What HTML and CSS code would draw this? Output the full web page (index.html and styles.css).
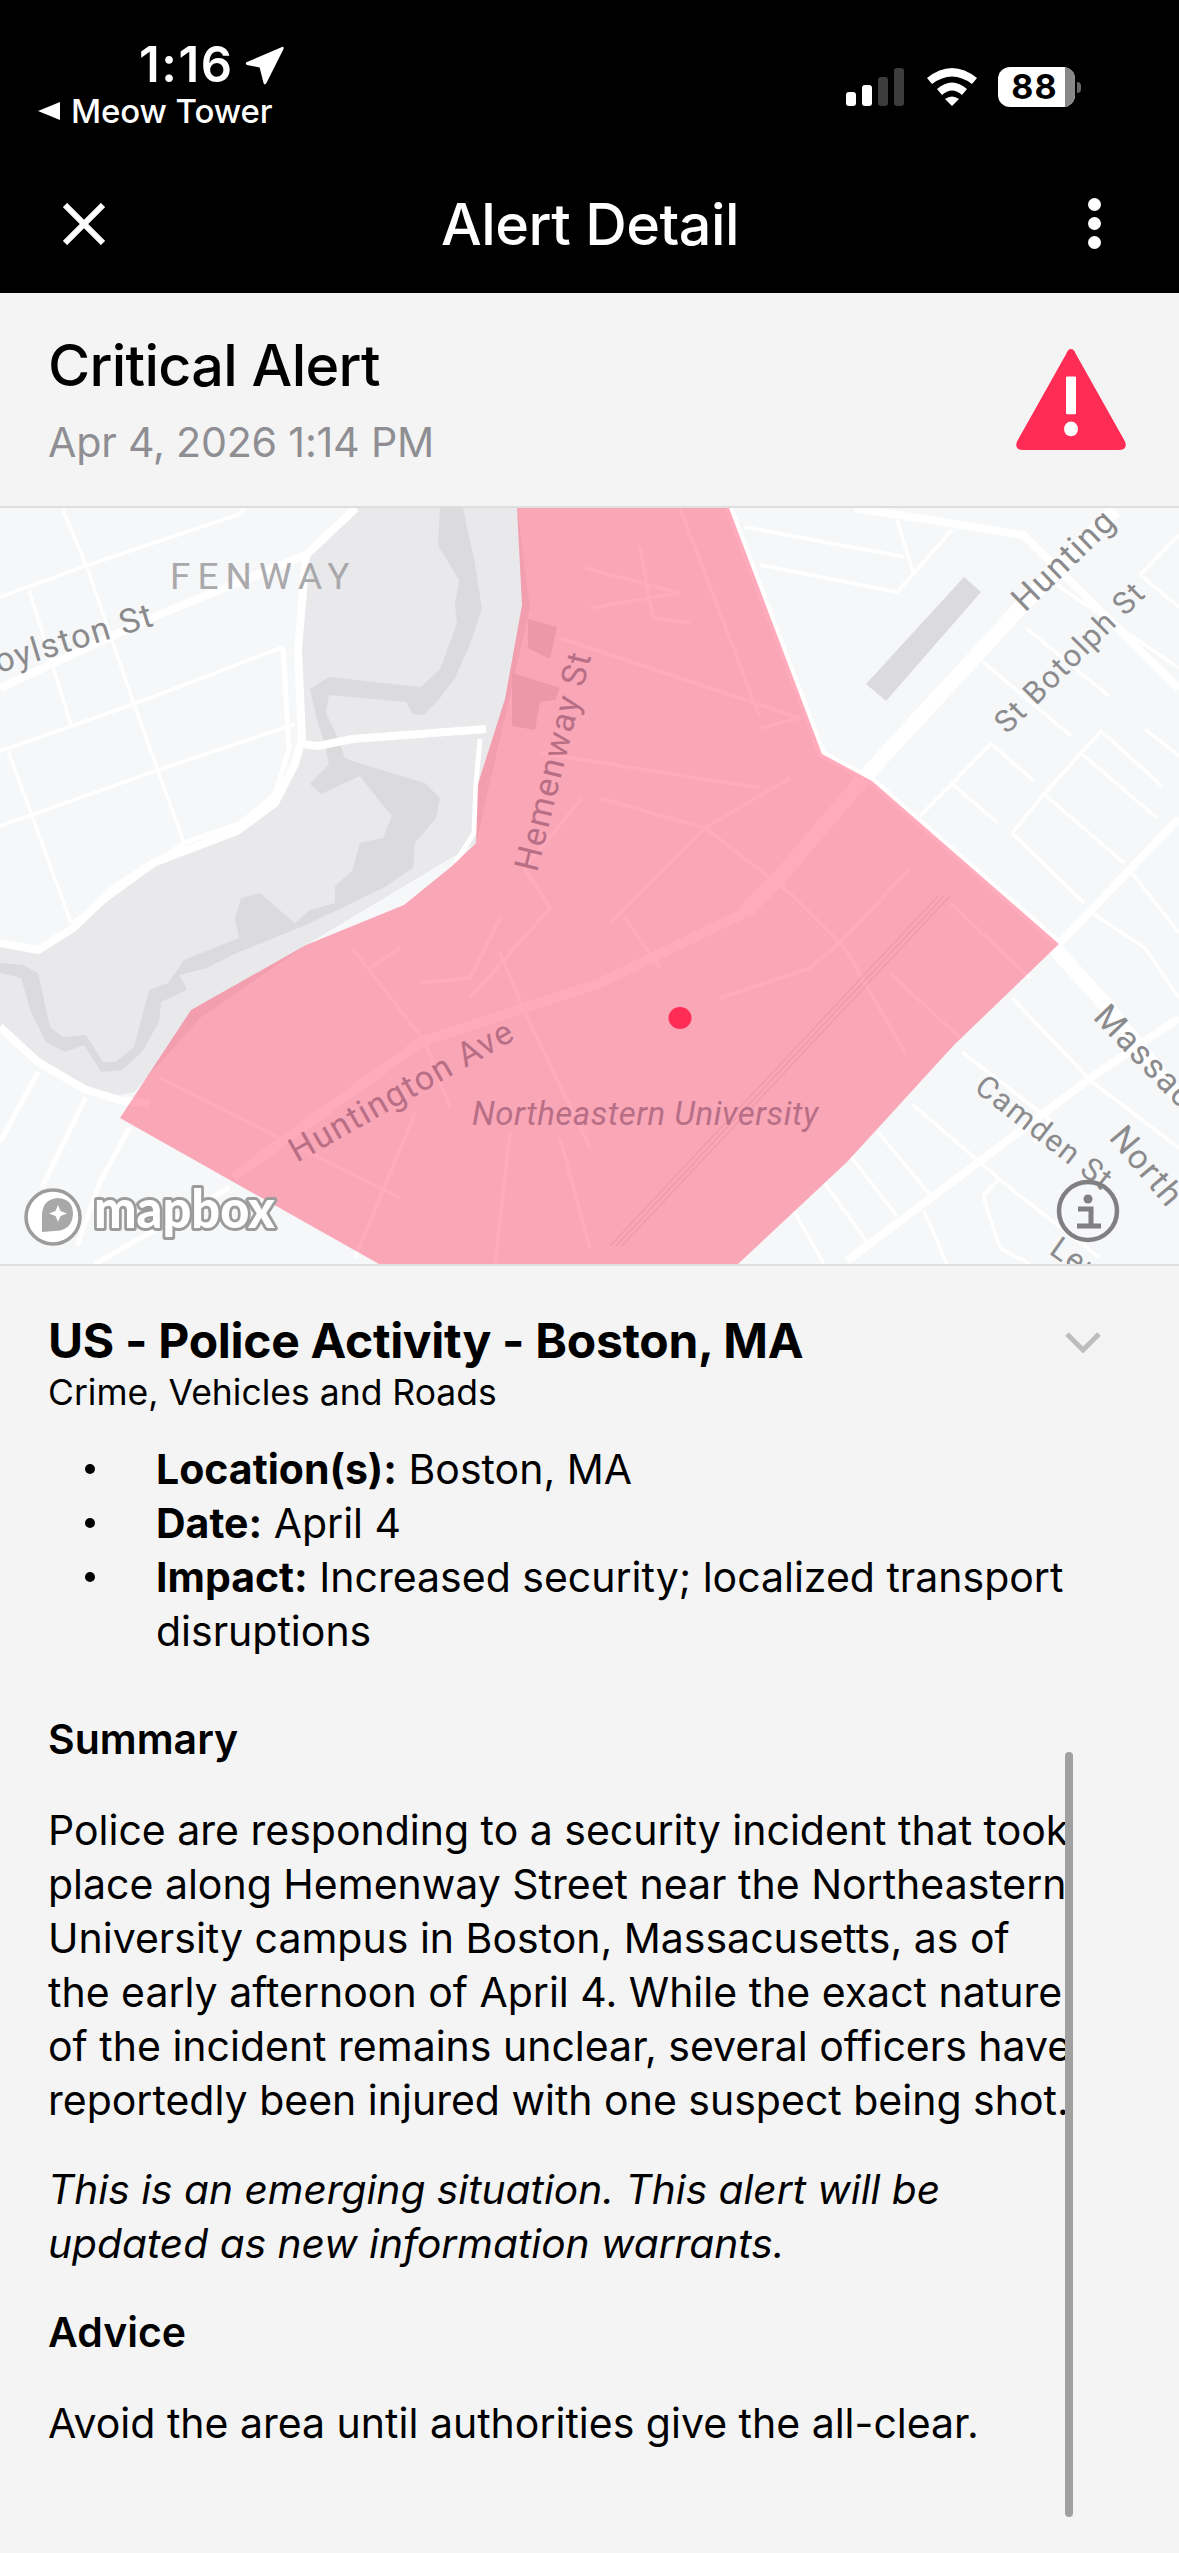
FILE: index.html
```html
<!DOCTYPE html>
<html lang="en">
<head>
<meta charset="utf-8">
<title>Alert Detail</title>
<link rel="stylesheet" href="styles.css">
</head>
<body>
<div class="phone">
  <header class="top">
    <div class="status">
      <div class="status-left">
        <div class="time-row">
          <span class="time">1:16</span>
          <svg class="loc" viewBox="0 0 40 40"><path d="M38 1 Q40 0 39.500 3 L22 38 Q20 41 19 38 L15 22 L2 19.500 Q-.5 18 2 16.500 Z"/></svg>
        </div>
        <div class="back-row">
          <svg class="back-tri" viewBox="0 0 22 18"><path d="M22 0 V18 L0 9 Z"/></svg>
          <span class="back-label">Meow Tower</span>
        </div>
      </div>
      <div class="status-right">
        <svg class="signal" viewBox="0 0 58 38">
          <rect class="on" x="0" y="24" width="10" height="14" rx="3"/>
          <rect class="on" x="16" y="17" width="10" height="21" rx="3"/>
          <rect class="off" x="32" y="9" width="10" height="29" rx="3"/>
          <rect class="off" x="48" y="0" width="10" height="38" rx="3"/>
        </svg>
        <svg class="wifi" viewBox="0 0 50 38">
          <path d="M0 10 Q25 -10 50 10 L45 16 Q25 1 5 16 Z"/>
          <path d="M10 21 Q25 8 40 21 L35 27 Q25 18 15 27 Z"/>
          <path d="M18 31 Q25 26 32 31 L25 38 Z"/>
        </svg>
        <div class="battery"><span class="batt-num">88</span><span class="batt-empty"></span></div>
        <span class="batt-cap"></span>
      </div>
    </div>
    <nav class="nav">
      <svg class="close" viewBox="0 0 42 42"><path d="M2 2 L40 40 M40 2 L2 40"/></svg>
      <h1 class="nav-title">Alert Detail</h1>
      <div class="dots"><span></span><span></span><span></span></div>
    </nav>
  </header>

  <section class="alert-head">
    <div>
      <h2 class="alert-title">Critical Alert</h2>
      <p class="alert-date">Apr 4, 2026 1:14 PM</p>
    </div>
    <svg class="warn" viewBox="0 3 112 98" preserveAspectRatio="none">
      <path class="warn-tri" d="M56 4 Q59 4 61 9 L110 92 Q113 100 104 100 H8 Q-1 100 2 92 L51 9 Q53 4 56 4 Z"/>
      <rect class="warn-mark" x="51" y="30" width="10" height="36" rx="1"/>
      <circle class="warn-mark" cx="56" cy="80" r="7"/>
    </svg>
  </section>

  <div class="map">
    <svg class="map-svg" viewBox="0 0 1179 756">
      <rect class="land" width="1179" height="756"/>
      <!-- park and stream -->
      <path class="park" d="M356 0 L306 47 L298 141 L302 231 L295 256 L275 295 L237 323 L153 355 L115 380 L73 420 L38 442 L0 435 V519 L38 554 L84 581 L119 587 L134 584 L200 510 L306 437 L476 335 L530 100 L517 0 Z"/>
      <path class="water" d="M440 0 L438 37 L459 72 L455 96 L457 116 L440 161 L421 179 L329 169 L310 181 L318 216 L325 236 L329 256 L310 276 L321 286 L360 268 L377 290 L392 308 L383 330 L360 335 L352 363 L335 378 L335 395 L310 402 L295 415 L283 405 L260 385 L241 390 L235 410 L239 430 L184 452 L168 475 L149 482 L134 539 L115 554 L103 554 L86 527 L63 529 L50 519 L38 465 L23 457 L0 455 V465 L21 470 L31 504 L46 534 L65 544 L84 537 L101 564 L122 562 L142 544 L159 514 L161 494 L187 482 L180 467 L207 460 L237 445 L306 417 L383 380 L413 360 L415 335 L436 310 L440 290 L425 275 L362 256 L345 250 L337 228 L326 205 L329 187 L406 194 L413 206 L424 207 L440 190 L455 170 L470 136 L482 101 L474 50 L467 20 L463 0 Z"/>
      <path class="bldg" d="M528 111 L557 119 L550 151 L528 140 Z M512 165 L560 180 L555 192 L540 194 L535 222 L512 218 Z"/>
      <path class="water" d="M964 69 L981 84 L886 193 L866 176 Z"/>

      <!-- thick roads -->
      <g class="road-thick">
        <path d="M0 180 L153 109 L306 47 L356 0"/>
        <path d="M306 47 L298 141 L302 231 L295 256 L275 295 L237 323 L153 355 L115 380 L73 420 L38 442 L0 435"/>
        <path d="M0 519 L38 554 L84 581 L119 592 L150 596"/>
        <path d="M302 236 L318 238 L352 231 L486 221"/>
        <path d="M855 0 L1023 27 L1054 57 L1179 181"/>
        <path d="M1059 436 L1179 310"/>
        <path d="M1179 510 L1092 569 L1019 624 L847 753"/>
        <path d="M729 0 L822 246 L872 273 L1059 436"/>
      </g>
      <path class="road-wide" d="M744 405 L779 370 L870 263 L1019 101 L1115 2"/>
      <path class="road-huntington" d="M233 669 L421 534 L600 475 L744 405"/>
      <path class="road-wide" d="M1054 440 L1103 494 L1179 590"/>
      <g class="road-mid">
        <path d="M480 231 L476 276 L474 325 L455 355"/>
        <path d="M73 415 L184 335 L241 315 L275 286 L289 241 L283 139"/>
        <path d="M38 564 L0 634"/>
        <path d="M86 589 L42 679"/>
        <path d="M130 619 L100 674 L77 738"/>
        <path d="M230 679 L95 756"/>
      </g>
      <!-- thin streets -->
      <g class="road-thin">
        <path d="M0 89 L88 57 L237 7 L245 0"/>
        <path d="M63 2 L88 62 L134 196 L184 335"/>
        <path d="M29 82 L72 220"/>
        <path d="M0 243 L134 196 L283 139"/>
        <path d="M8 243 L31 305 L71 415"/>
        <path d="M0 318 L161 261 L295 216"/>
        <path d="M744 19 L905 49"/>
        <path d="M760 57 L897 84 L952 22"/>
        <path d="M897 12 L914 67"/>
        <path d="M983 154 L1071 228"/>
        <path d="M1027 121 L1109 188"/>
        <path d="M1057 77 L1179 160"/>
        <path d="M920 308 L991 236 L1034 273"/>
        <path d="M952 276 L998 315"/>
        <path d="M1012 325 L1044 286 L1101 223 L1162 278"/>
        <path d="M1012 325 L1084 395"/>
        <path d="M1044 286 L1124 355"/>
        <path d="M1082 246 L1157 310"/>
        <path d="M1145 221 L1179 248"/>
        <path d="M1140 67 L1179 27"/>
        <path d="M1140 67 L1179 99"/>
        <path d="M1132 365 L1179 425"/>
        <path d="M1092 405 L1145 440 L1179 490"/>
        <path d="M1012 490 L1092 574 L1179 640"/>
        <path d="M962 544 L1050 612 L1034 634"/>
        <path d="M912 596 L1010 680 L1100 750"/>
        <path d="M878 624 L931 688"/>
        <path d="M851 649 L897 708"/>
        <path d="M824 674 L866 733"/>
        <path d="M794 703 L824 756"/>
        <path d="M924 703 L947 756"/>
        <path d="M983 688 L1000 670 M983 688 L1000 740 L1030 756"/>
        <!-- under the polygon -->
        <path d="M352 440 L425 534 L450 600"/>
        <path d="M500 445 L530 515 L590 640"/>
        <path d="M470 490 L550 400 L524 360 L582 290"/>
        <path d="M420 475 L470 470 L500 410"/>
        <path d="M370 460 L400 440"/>
        <path d="M160 570 L400 690"/>
        <path d="M415 605 L355 750"/>
        <path d="M510 625 L495 756"/>
        <path d="M560 630 L590 740"/>
        <path d="M585 60 L680 85 L590 100"/>
        <path d="M560 130 L800 210 L760 220"/>
        <path d="M540 245 L760 280"/>
        <path d="M600 290 L705 320 L790 385 L845 440 L905 545"/>
        <path d="M610 415 L705 320 L790 270"/>
        <path d="M625 410 L660 460"/>
        <path d="M720 490 L810 460 L845 430 L910 360"/>
        <path d="M640 40 L653 110 L690 115"/>
        <path d="M680 0 L760 210"/>
        <path d="M950 395 L1030 470"/>
        <path d="M890 465 L960 530"/>
      </g>
      <g class="rail">
        <path d="M950 388 L622 738"/>
        <path d="M944 388 L616 738"/>
        <path d="M938 388 L610 738"/>
      </g>

      <!-- the alert polygon and its centre -->
      <path class="zone" d="M517 0 L729 0 L822 246 L872 273 L1059 436 L954 537 L847 654 L738 756 L379 756 L120 610 L191 502 L306 437 L404 397 L452 358 L476 335 L478 276 L505 191 L522 97 Z"/>
      <ellipse class="zone-dot" cx="680" cy="510" rx="11.500" ry="11"/>

      <!-- labels -->
      <text class="lbl lbl-area" x="170" y="81">FENWAY</text>
      <text class="lbl" transform="translate(156 117) rotate(-17)" text-anchor="end">Boylston St</text>
      <text class="lbl lbl-pink" transform="translate(537 365) rotate(-76)">Hemenway St</text>
      <text class="lbl lbl-pink" transform="translate(297 655) rotate(-29.500)">Huntington Ave</text>
      <text class="lbl lbl-pink lbl-it" x="472" y="617">Northeastern University</text>
      <text class="lbl" transform="translate(1025 105) rotate(-44)">Hunting</text>
      <text class="lbl lbl-sm" transform="translate(1007 227) rotate(-45)">St Botolph St</text>
      <text class="lbl" transform="translate(1092 510) rotate(46)">Massac</text>
      <text class="lbl" transform="translate(1108 630) rotate(50)">North</text>
      <text class="lbl lbl-sm" transform="translate(973 582) rotate(38)">Camden St</text>
      <text class="lbl lbl-sm" transform="translate(1048 745) rotate(35)">Len</text>

      <!-- mapbox mark -->
      <circle class="mb-ring" cx="53" cy="709" r="27"/>
      <path class="mb-in" d="M42 724 L42 706 Q43 691 58 690 Q73 691 73 706 Q72 723 54 723 Z"/>
      <path class="mb-star" d="M58 697 L60.500 703 L67 705.500 L60.500 708 L58 714 L55.500 708 L49 705.500 L55.500 703 Z"/>
      <text class="mb-word" x="94" y="720" textLength="181" lengthAdjust="spacingAndGlyphs">mapbox</text>

      <!-- attribution button -->
      <circle class="info-ring" cx="1088" cy="703" r="29"/>
      <circle class="info-fill" cx="1088" cy="691" r="4.500"/>
      <path class="info-i" d="M1078 701 H1091 V717 M1077 718 H1101"/>
    </svg>
  </div>

  <main class="detail">
    <div class="detail-head">
      <div>
        <h3 class="event">US - Police Activity - Boston, MA</h3>
        <p class="cats">Crime, Vehicles and Roads</p>
      </div>
      <svg class="chev" viewBox="0 0 36 22"><path d="M2 3 L18 19 L34 3"/></svg>
    </div>
    <ul class="facts">
      <li><b>Location(s):</b> Boston, MA</li>
      <li><b>Date:</b> April 4</li>
      <li><b>Impact:</b> Increased security; localized transport disruptions</li>
    </ul>
    <h4 class="sec">Summary</h4>
    <p class="body">Police are responding to a security incident that took<br>place along Hemenway Street near the Northeastern<br>University campus in Boston, Massacusetts, as of<br>the early afternoon of April 4. While the exact nature<br>of the incident remains unclear, several officers have<br>reportedly been injured with one suspect being shot.</p>
    <p class="body body-it">This is an emerging situation. This alert will be<br>updated as new information warrants.</p>
    <h4 class="sec">Advice</h4>
    <p class="body">Avoid the area until authorities give the all-clear.</p>
  </main>
  <div class="scrollbar"></div>
</div>
</body>
</html>
```

FILE: styles.css
```css
* { box-sizing: border-box; }
html, body { margin: 0; padding: 0; }
body { background: #f4f4f4; font-family: Inter, "Liberation Sans", sans-serif; color: #000; }
h1, h2, h3, h4, p, ul { margin: 0; padding: 0; }

.phone { position: relative; width: 1179px; height: 2553px; overflow: hidden; background: #f4f4f4; }

/* header */
.top { background: #000; color: #fff; height: 293px; display: flex; flex-direction: column; }
.status { height: 160px; display: flex; justify-content: space-between; padding: 38px 0 0 38px; }
.status-left { display: flex; flex-direction: column; }
.time-row { display: flex; align-items: center; padding-left: 101px; height: 54px; gap: 11px; }
.time { font-size: 49px; font-weight: 600; letter-spacing: 1.600px; line-height: 54px; }
.loc { width: 39px; height: 39px; fill: #fff; }
.back-row { display: flex; align-items: center; gap: 11px; height: 38px; }
.back-tri { width: 22px; height: 18px; fill: #fff; }
.back-label { font-size: 33px; font-weight: 500; line-height: 38px; letter-spacing: -.1px; }
.status-right { display: flex; align-items: center; height: 38px; margin-top: 30px; padding-right: 98px; }
.signal { width: 58px; height: 38px; margin-right: 23px; }
.signal .on { fill: #fff; }
.signal .off { fill: #3c3c3c; }
.wifi { width: 50px; height: 38px; margin-right: 21px; fill: #fff; }
.battery { position: relative; width: 77px; height: 40px; border-radius: 12px; background: #fff; overflow: hidden; display: flex; align-items: center; justify-content: center; flex: none; }
.batt-num { font-size: 34px; font-weight: 700; color: #000; padding-right: 4px; line-height: 1; letter-spacing: 1px; }
.batt-empty { position: absolute; top: 0; right: 0; width: 10px; height: 40px; background: #888; }
.batt-cap { width: 4px; height: 11px; margin-left: 2px; border-radius: 0 4px 4px 0; background: #666; }

.nav { flex: 1; display: flex; align-items: center; justify-content: space-between; padding: 0 78px 6px 63px; }
.close { width: 42px; height: 42px; fill: none; stroke: #fff; stroke-width: 6; }
.nav-title { font-size: 57.500px; font-weight: 500; letter-spacing: -.5px; line-height: 70px; margin-right: 13px; }
.dots { display: flex; flex-direction: column; gap: 6px; }
.dots span { display: block; width: 13px; height: 13px; border-radius: 50%; background: #fff; }

/* alert heading */
.alert-head { height: 215px; padding: 37px 52px 0 48px; display: flex; justify-content: space-between; align-items: flex-start; border-bottom: 2px solid #dedede; background: #f4f4f4; }
.alert-title { font-size: 57.500px; font-weight: 500; letter-spacing: -.7px; line-height: 70px; }
.alert-date { font-size: 41.200px; font-weight: 400; color: #8e8e93; line-height: 50px; margin-top: 17px; letter-spacing: -.2px; }
.warn { width: 112px; height: 103px; margin-top: 18px; }
.warn-tri { fill: #ff2d55; }
.warn-mark { fill: #fff; }

/* map */
.map { height: 758px; background: #f6f7f8; border-bottom: 2px solid #dedede; }
.map-svg { display: block; width: 1179px; height: 756px; }
.land { fill: #f6f7f8; }
.park { fill: #e9e9eb; }
.water { fill: #dbdbdd; }
.bldg { fill: #dfdfe1; }
.road-thick path, .road-wide, .road-huntington, .road-mid path, .road-thin path, .rail path { fill: none; stroke: #fff; stroke-linejoin: round; }
.road-thick path { stroke-width: 8; }
.road-wide { stroke-width: 15; }
.road-huntington { stroke-width: 10; }
.road-mid path { stroke-width: 5; }
.road-thin path { stroke-width: 3.500; }
.rail path { stroke: #d4d4d6; stroke-width: 1.500; stroke-opacity: .5; }
.zone { fill: #ff2d55; fill-opacity: .4; }
.zone-dot { fill: #ff2d55; }
.lbl { font-family: Roboto, "Liberation Sans", sans-serif; font-size: 34px; fill: #8b8b8e; letter-spacing: 1.500px; }
.lbl-sm { font-size: 31px; }
.lbl-pink { fill: #b86f86; }
.lbl-it { font-style: italic; font-size: 33px; letter-spacing: .5px; }
.lbl-area { font-size: 37px; fill: #a9a9ac; letter-spacing: 7px; }
.mb-ring { fill: #fff; stroke: #9c9c9c; stroke-width: 3.500; }
.mb-in { fill: #a8a8a8; }
.mb-star { fill: #fff; }
.mb-word { font-family: Lato, Roboto, sans-serif; font-size: 54px; font-weight: 900; fill: #fff; stroke: #9c9c9c; stroke-width: 6; paint-order: stroke; stroke-linejoin: round; }
.info-ring { fill: none; stroke: #808083; stroke-width: 4.500; }
.info-fill { fill: #808083; }
.info-i { fill: none; stroke: #808083; stroke-width: 5; }

/* details */
.detail { padding: 47px 50px 0 48px; }
.detail-head { display: flex; justify-content: space-between; align-items: flex-start; padding-right: 28px; }
.event { font-size: 48px; font-weight: 700; letter-spacing: -.3px; line-height: 56px; }
.cats { font-size: 35.500px; line-height: 44px; margin-top: 2px; }
.chev { width: 36px; height: 22px; margin-top: 18px; fill: none; stroke: #bdbdbd; stroke-width: 5; }
.facts { list-style: none; margin: 27px 0 0 108px; }
.facts li { position: relative; font-size: 41px; line-height: 54px; }
.facts li::before { content: ""; position: absolute; left: -71px; top: 22px; width: 10px; height: 10px; border-radius: 50%; background: #000; }
.facts b { font-weight: 700; }
.sec { font-size: 41px; font-weight: 600; line-height: 54px; margin-top: 34px; }
.facts + .sec { margin-top: 54px; }
.detail .sec + .body { margin-top: 37px; }
.body { font-size: 41px; line-height: 54px; white-space: nowrap; }
.body-it { font-style: italic; font-size: 40.700px; margin-top: 36px; }
.scrollbar { position: absolute; left: 1065px; top: 1752px; width: 8px; height: 765px; border-radius: 4px; background: #a0a0a0; }
```
